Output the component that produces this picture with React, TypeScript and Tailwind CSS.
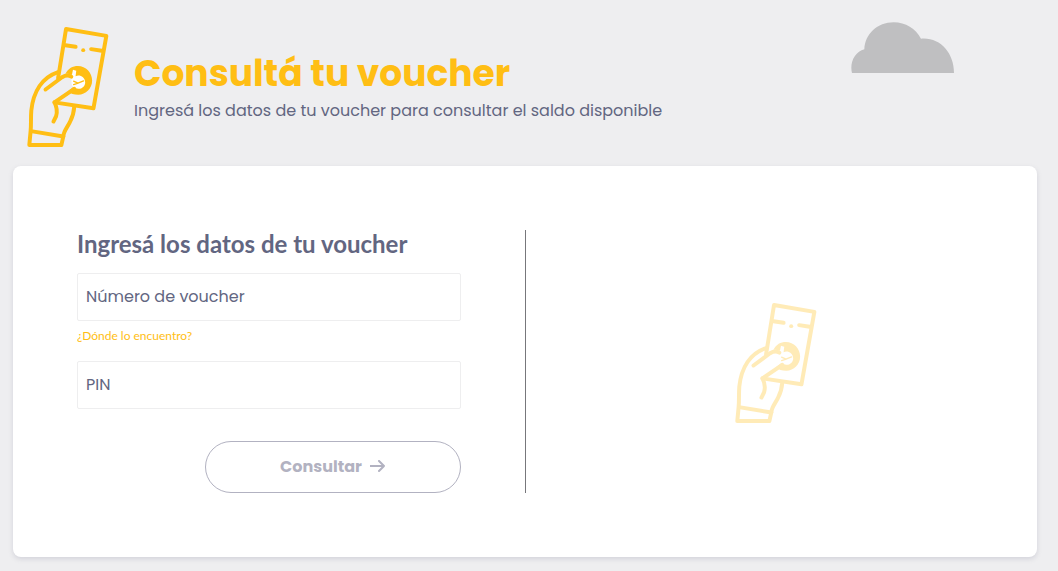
import { useState } from "react";

function VoucherHand({ className = "" }: { className?: string }) {
  return (
    <svg
      viewBox="36 33 246 369"
      className={className}
      fill="none"
      stroke="currentColor"
      strokeWidth="12"
      strokeLinecap="round"
      strokeLinejoin="round"
      aria-hidden="true"
    >
      <path d="M129 191 153 42 275 63 236 282 118 264" />
      <path d="M151 91 182 96M229 103 261 108" />
      <circle cx="205" cy="106" r="6" fill="currentColor" stroke="none" />
      <path
        d="M151 178C160 161 173 154 189 154C213 154 232 174 232 198C232 222 213 241 190 241C178 241 166 237 158 231L180 214L176 184C168 178 160 176 151 178Z"
        fill="currentColor"
        stroke="none"
      />
      <path
        d="M174 165 184 168 182 185C194 179 210 187 211 203C211 216 200 224 190 223C179 222 172 216 170 209L169 190Z"
        fill="white"
        stroke="none"
      />
      <path d="M176 200 189 206 206 199M176 210 190 206" strokeWidth="4" />
      <path d="M91 225 141 188C152 181 161 181 169 186" />
      <path d="M178 223 118 264C126 279 127 292 123 306L115 322" />
      <path d="M127 173C82 188 54 230 48 289C46 314 48 332 46 350L42 393H139L145 366C146 350 157 340 165 323C177 301 177 290 178 275" />
      <path d="M47 351 145 367" />
    </svg>
  );
}

function Cloud() {
  return (
    <svg viewBox="0 0 309 153" className="h-[51px] w-[103px]" aria-hidden="true">
      <path
        d="M3 153C-5 121 12 90 40 82C42 36 79 1 128 1C164 1 194 20 210 50C267 45 309 92 309 153Z"
        fill="#bfbfc1"
      />
    </svg>
  );
}

const field =
  "block h-12 w-full rounded-xs border border-[#eeeeef] bg-white px-2 pb-0.5 text-base text-[#626681] outline-none placeholder:text-[#626681] placeholder:opacity-100 focus:border-[#ffbe14]";

export default function App() {
  const [voucher, setVoucher] = useState("");
  const [pin, setPin] = useState("");

  return (
    <div className="min-h-screen bg-[#eeeef0] pt-[22px] pr-[21px] pb-3.5 pl-[13px] font-['Poppins','Inter',sans-serif] text-[#626681]">
      <header className="flex items-start justify-between pr-[83px] pb-[18px] pl-3.5">
        <div className="flex gap-[25px] pt-1">
          <VoucherHand className="h-[122px] w-[82px] shrink-0 text-[#ffbe14]" />
          <div className="pt-[23px]">
            <h1 className="text-4xl leading-[50px] font-bold text-[#ffbe14]">Consultá tu voucher</h1>
            <p className="text-base leading-6">
              Ingresá los datos de tu voucher para consultar el saldo disponible
            </p>
          </div>
        </div>
        <Cloud />
      </header>

      <main className="grid grid-cols-2 rounded-lg bg-white py-16 shadow-[0_2px_5px_rgba(90,90,120,0.18)]">
        <form className="px-16" onSubmit={(event) => event.preventDefault()}>
          <h2 className="mb-4 font-['Lato',sans-serif] text-2xl leading-[27px] font-bold">
            Ingresá los datos de tu voucher
          </h2>
          <input
            aria-label="Número de voucher"
            placeholder="Número de voucher"
            className={field}
            value={voucher}
            onChange={(event) => setVoucher(event.target.value)}
          />
          <a
            href="#ayuda"
            className="mt-1.5 mb-4 block font-['Lato',sans-serif] text-xs leading-[18px] text-[#ffbe14]"
          >
            ¿Dónde lo encuentro?
          </a>
          <input
            aria-label="PIN"
            placeholder="PIN"
            className={field}
            value={pin}
            onChange={(event) => setPin(event.target.value)}
          />
          <button
            type="submit"
            className="mt-8 ml-auto flex h-13 w-2/3 items-center justify-center gap-2 rounded-full border border-[#b2b2c1] text-base font-bold text-[#b2b2c1]"
          >
            Consultar
            <svg
              viewBox="0 0 16 14"
              className="h-3.5 w-4"
              fill="none"
              stroke="currentColor"
              strokeWidth="2"
              strokeLinecap="round"
              strokeLinejoin="round"
              aria-hidden="true"
            >
              <path d="M0 6H14M9 1 14 6 9 11" />
            </svg>
          </button>
        </form>
        <div className="flex items-center justify-center border-l border-[#77777b] pt-0.5 pr-3">
          <VoucherHand className="h-[122px] w-[82px] text-[#ffbe14] opacity-30" />
        </div>
      </main>
    </div>
  );
}
